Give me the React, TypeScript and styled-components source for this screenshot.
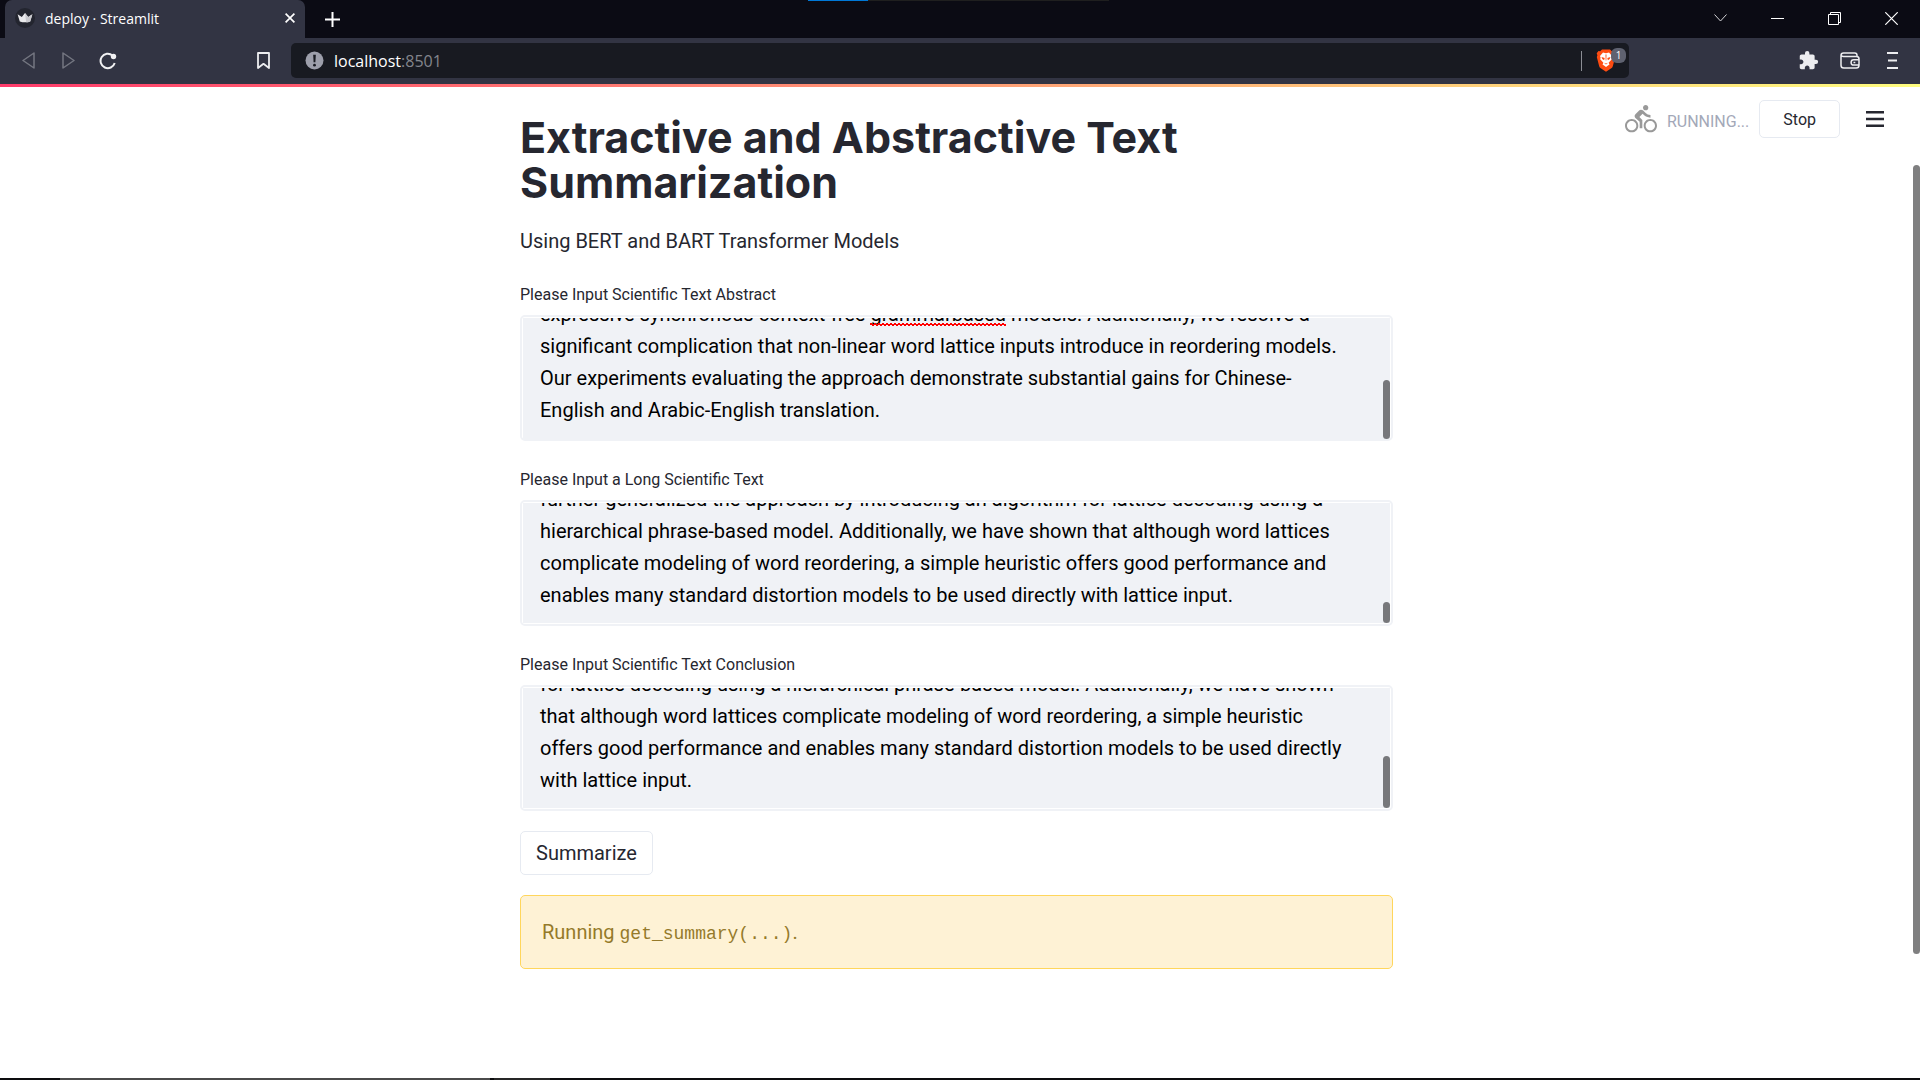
import React, { useLayoutEffect, useRef, useState } from 'react';
import styled, { createGlobalStyle } from 'styled-components';
import { MdDirectionsBike, MdExtension } from 'react-icons/md';

const bodyFont = 'Roboto, "Liberation Sans", sans-serif';
const chromeFont = '"Open Sans", "Noto Sans", sans-serif';
const ink = '#262730';
const field = '#f0f2f6';

const GlobalStyle = createGlobalStyle`
  *, *::before, *::after { box-sizing: border-box; }
  body { margin: 0; font-family: ${bodyFont}; color: ${ink}; background: #fff; }
  button, input, textarea { font: inherit; color: inherit; }
  button { cursor: pointer; }
  svg { display: block; flex: none; }
`;

const Window = styled.div`
  display: flex;
  flex-direction: column;
  min-height: 100vh;
`;

/* ---------- browser frame ---------- */

const TabStrip = styled.div`
  display: flex;
  height: 38px;
  padding-left: 5px;
  color: #fff;
  font-family: ${chromeFont};
  background:
    linear-gradient(90deg, #0078d7 60px, #1f1f1f 60px) 808px 0 / 301px 1px no-repeat,
    #0b0b14;
`;

const Tab = styled.div`
  display: flex;
  align-items: center;
  gap: 10px;
  width: 300px;
  padding: 0 6px 2px 10px;
  border-radius: 7px 7px 0 0;
  background: #323443;
  font-size: 14px;
`;

const TabTitle = styled.span`
  flex: 1;
`;

const BareButton = styled.button<{ $width: number }>`
  display: flex;
  align-items: center;
  justify-content: center;
  width: ${(p) => p.$width}px;
  padding: 0;
  border: 0;
  background: none;
`;

const WindowControls = styled.div`
  display: flex;
  margin-left: auto;
  padding-bottom: 2px;
`;

const Toolbar = styled.div`
  display: grid;
  grid-template-columns: 291px 1fr 291px;
  height: 46px;
  padding: 5px 0 6px;
  background: #323443;
  color: #ededf0;
`;

const ToolGroup = styled.div<{ $gap: number; $end?: boolean }>`
  display: flex;
  align-items: center;
  justify-content: ${(p) => (p.$end ? 'flex-end' : 'flex-start')};
  gap: ${(p) => p.$gap}px;
  padding: 0 18px;
`;

const Spacer = styled.span`
  flex: 1;
`;

const AddressBar = styled.div`
  display: flex;
  align-items: center;
  padding: 0 12px 0 14px;
  border-radius: 5px;
  background: #181a21;
`;

const Address = styled.a`
  flex: 1;
  margin-left: 10px;
  color: #fff;
  font: 16px/24px ${chromeFont};
  text-decoration: none;
`;

const Port = styled.span`
  color: #83858c;
`;

const Divider = styled.span`
  width: 1px;
  height: 20px;
  margin-right: 14px;
  background: #8b8d94;
`;

const ShieldButton = styled.button`
  position: relative;
  padding: 0;
  margin-right: 1px;
  border: 0;
  background: none;
`;

const ShieldCount = styled.span`
  position: absolute;
  top: -1px;
  left: 15px;
  width: 15px;
  border-radius: 6px;
  background: #5f6270;
  color: #fff;
  font: 10px/15px ${chromeFont};
  text-align: center;
`;

/* ---------- page ---------- */

const Rainbow = styled.div`
  height: 3px;
  background: linear-gradient(90deg, #ff3b6b, #fffd80);
`;

const Page = styled.div`
  position: relative;
  display: flex;
  flex: 1;
`;

const Content = styled.main`
  flex: 1;
  padding: 28px 20px 0;
`;

const Column = styled.div`
  max-width: 873px;
  margin: 0 auto;
`;

const PageTrack = styled.div`
  width: 7px;
  padding-top: 78px;
`;

const PageThumb = styled.div`
  height: 789px;
  border-radius: 4px;
  background: #7f7f80;
`;

const StatusBar = styled.header`
  position: absolute;
  top: 13px;
  right: 36px;
  display: flex;
  align-items: center;
  height: 38px;
  font-size: 16px;
`;

const Status = styled.span`
  margin: 5px 10px 0;
  color: #a3a8b8;
  font-size: 16px;
`;

const OutlineButton = styled.button<{ $small?: boolean }>`
  height: ${(p) => (p.$small ? 38 : 44)}px;
  padding: 0 ${(p) => (p.$small ? 23 : 15)}px;
  border: 1px solid #e6eaf1;
  border-radius: 5px;
  background: #fff;
  font-size: ${(p) => (p.$small ? 16 : 20)}px;
`;

const MenuButton = styled.button`
  margin-left: 26px;
  padding: 0;
  border: 0;
  background: none;
`;

const Title = styled.h1`
  margin: 0;
  font: 700 43px/45px Inter, "Liberation Sans", sans-serif;
`;

const Subtitle = styled.p`
  margin: 21px 0 0;
  font-size: 20px;
  line-height: 30px;
`;

const Field = styled.div`
  margin-top: 26px;
`;

const Label = styled.label`
  display: block;
  margin-bottom: 8px;
  font-size: 16px;
  line-height: 25px;
`;

const Frame = styled.div`
  position: relative;
  height: 126px;
  overflow: hidden;
  border: 2px solid ${field};
  border-radius: 5px;
  background: ${field};
`;

const TextArea = styled.textarea<{ $openBottom?: boolean }>`
  display: block;
  width: 100%;
  height: 100%;
  padding: 16px 17px 12px;
  overflow: hidden;
  border: 1px solid #fff;
  border-bottom-color: ${(p) => (p.$openBottom ? field : '#fff')};
  outline: 0;
  background: ${field};
  color: #000;
  font-size: 20px;
  line-height: 32px;
  white-space: pre;
  resize: none;
`;

const Thumb = styled.span<{ $length: number; $openBottom?: boolean }>`
  position: absolute;
  right: 1px;
  bottom: ${(p) => (p.$openBottom ? 0 : 1)}px;
  width: 7px;
  height: ${(p) => p.$length}px;
  border-radius: 4px;
  background: #77787b;
`;

const Squiggle = styled.span`
  position: absolute;
  top: 6px;
  height: 3px;
  background:
    linear-gradient(45deg, transparent 35%, #f00 35%, #f00 65%, transparent 65%) 0 0 / 4px 3px,
    linear-gradient(-45deg, transparent 35%, #f00 35%, #f00 65%, transparent 65%) 2px 0 / 4px 3px;
`;

const Actions = styled.div`
  margin: 20px 0;
`;

const Notice = styled.div`
  padding: 20px 21px;
  border: 1px solid #ffd65c;
  border-radius: 5px;
  background: #fef2d5;
  color: #957a2a;
  font-size: 20px;
  line-height: 32px;
`;

const Code = styled.code`
  font-family: "Liberation Mono", monospace;
  font-size: 18px;
  line-height: 20px;
`;

const Taskbar = styled.div`
  height: 2px;
  background: linear-gradient(
    90deg, #0d0d0f 60px, #4b4b4b 60px, #4b4b4b 490px, #0d0d0f 490px,
    #0d0d0f 494px, #262626 494px, #262626 550px, #0d0d0f 550px
  );
`;

type FieldProps = {
  id: string;
  label: string;
  lines: string[];
  thumb: number;
  openBottom?: boolean;
  misspelt?: string;
};

function LongText({ id, label, lines, thumb, openBottom, misspelt }: FieldProps) {
  const area = useRef<HTMLTextAreaElement>(null);
  const [mark, setMark] = useState<{ left: number; width: number } | null>(null);

  useLayoutEffect(() => {
    const el = area.current;
    if (!el) return;
    el.scrollTop = el.scrollHeight;
    const ctx = document.createElement('canvas').getContext('2d');
    if (misspelt && ctx) {
      ctx.font = `20px ${bodyFont}`;
      const before = lines[0].slice(0, lines[0].indexOf(misspelt));
      setMark({
        left: 18 + Math.round(ctx.measureText(before).width),
        width: Math.round(ctx.measureText(misspelt).width),
      });
    }
  }, []);

  return (
    <Field>
      <Label htmlFor={id}>{label}</Label>
      <Frame>
        <TextArea id={id} ref={area} $openBottom={openBottom} spellCheck={false} defaultValue={lines.join('\n')} />
        {mark && <Squiggle style={mark} />}
        <Thumb $length={thumb} $openBottom={openBottom} />
      </Frame>
    </Field>
  );
}

const Favicon = () => (
  <svg width="20" height="20" viewBox="0 0 20 20">
    <circle cx="10" cy="10" r="10" fill="#23252f" />
    <path d="M2.6 6.2 6.8 9 10 5l3.2 4 4.2-2.8-2.2 7.2q-5.2 1.8-10.4 0z" fill="#e9e9ec" />
    <path d="M10 5l3.2 4 4.2-2.8-2.2 7.2q-2 .8-4 .9z" fill="#c9c9ce" />
  </svg>
);

const Brave = () => (
  <svg width="20" height="23" viewBox="0 0 20 23">
    <path d="M6 .5h8l1.8 1.7 1.7-.2 1.8 2.3-.7 2 .6 1.7-2.4 9.2q-.4 1.3-1.5 2.1L10 22.8l-5.3-3.5q-1.1-.8-1.5-2.1L.8 8l.6-1.7-.7-2L2.500 2l1.700.2z" fill="#fd4c12" />
    <path d="M10 4.200l3-.7 3 3.400-.6 1.800.4 1.500-3.200 3.500.9 1.700-1.500 1.200L10 18l-2-1.400-1.500-1.200.9-1.700L4.200 10.200l.4-1.500L4 6.900l3-3.400z" fill="#fff" />
    <path d="M5.500 8l3.200.9-.6 2.300-1.800-1.300zM14.500 8l-3.200.9.6 2.300 1.800-1.300zM8 13.700l2 .8 2-.8-2 1.900zM9.500 5.500h1l-.2 6h-.6z" fill="#fd4c12" />
  </svg>
);

export default function App() {
  return (
    <Window>
      <GlobalStyle />
      <TabStrip>
        <Tab>
          <Favicon />
          <TabTitle>deploy · Streamlit</TabTitle>
          <BareButton $width={18} aria-label="Close tab">
            <svg width="10" height="10" viewBox="0 0 10 10" stroke="#fff" strokeWidth="1.7"><path d="M.6.6l8.8 8.8M9.4.6L.6 9.4" /></svg>
          </BareButton>
        </Tab>
        <BareButton $width={54} aria-label="New tab">
          <svg width="15" height="15" viewBox="0 0 15 15" stroke="#fff" strokeWidth="2"><path d="M7.5 0v15M0 7.5h15" /></svg>
        </BareButton>
        <WindowControls>
          <BareButton $width={57} aria-label="Search tabs">
            <svg width="13" height="8" viewBox="0 0 13 8" fill="none" stroke="#d5d5d8"><path d="M.5.5l6 6.500 6-6.500" /></svg>
          </BareButton>
          <BareButton $width={57} aria-label="Minimize">
            <svg width="13" height="1" viewBox="0 0 13 1"><path d="M0 0h13v1H0z" fill="#fff" /></svg>
          </BareButton>
          <BareButton $width={57} aria-label="Restore">
            <svg width="13" height="13" viewBox="0 0 13 13" fill="none" stroke="#fff"><path d="M.5 2.500h10v10H.5zM2.500 2.500v-2h10v10h-2" /></svg>
          </BareButton>
          <BareButton $width={57} aria-label="Close">
            <svg width="13" height="13" viewBox="0 0 13 13" stroke="#fff" strokeWidth="1.2"><path d="M.3.3l12.400 12.400M12.700.3L.3 12.700" /></svg>
          </BareButton>
        </WindowControls>
      </TabStrip>
      <Toolbar>
        <ToolGroup $gap={20}>
          <BareButton $width={20} aria-label="Back">
            <svg width="13" height="17" viewBox="0 0 13 17" fill="none" stroke="#747681" strokeWidth="1.5" strokeLinejoin="round"><path d="M12 1v15L1 8.500z" /></svg>
          </BareButton>
          <BareButton $width={20} aria-label="Forward">
            <svg width="13" height="17" viewBox="0 0 13 17" fill="none" stroke="#747681" strokeWidth="1.5" strokeLinejoin="round"><path d="M1 1v15l11-7.500z" /></svg>
          </BareButton>
          <BareButton $width={20} aria-label="Reload">
            <svg width="18" height="18" viewBox="0 0 18 18" fill="none" stroke="#f1f1f3" strokeWidth="2"><path d="M15.700 11A7.200 7.200 0 1 1 13.500 3.500" /><circle cx="14.5" cy="4.5" r="2.7" fill="#f1f1f3" stroke="none" /></svg>
          </BareButton>
          <Spacer />
          <BareButton $width={20} aria-label="Bookmark">
            <svg width="13" height="17" viewBox="0 0 13 17" fill="none" stroke="#ededf0" strokeWidth="1.8" strokeLinejoin="round"><path d="M1 1h11v15l-5.500-4.200L1 16z" /></svg>
          </BareButton>
        </ToolGroup>
        <AddressBar>
          <svg width="19" height="19" viewBox="0 0 19 19"><circle cx="9.5" cy="9.5" r="9" fill="#9d9fab" /><path d="M8.200 3.800h2.600l-.4 7.400H8.600z" fill="#181a21" /><circle cx="9.5" cy="14.2" r="1.4" fill="#181a21" /></svg>
          <Address href="#top">localhost<Port>:8501</Port></Address>
          <Divider />
          <ShieldButton aria-label="Shields">
            <Brave />
            <ShieldCount>1</ShieldCount>
          </ShieldButton>
        </AddressBar>
        <ToolGroup $gap={22} $end>
          <BareButton $width={20} aria-label="Extensions"><MdExtension size={21} /></BareButton>
          <BareButton $width={20} aria-label="Wallet">
            <svg width="20" height="17" viewBox="0 0 20 17" fill="none" stroke="#ededf0" strokeWidth="1.5"><path d="M17 4.500V3.300Q17 1 14.700 1H3.500Q1 1 1 3.500v9.700Q1 16 3.800 16h12.400Q19 16 19 13.200V7q0-2.500-2.500-2.500H3.500Q1.300 4.500 1 2.800" /><path d="M19 7.800h-5.300a2.600 2.600 0 0 0 0 5.200H19M13.500 10.400h1.800" /></svg>
          </BareButton>
          <BareButton $width={20} aria-label="Browser menu">
            <svg width="11" height="17" viewBox="0 0 11 17" stroke="#ededf0" strokeWidth="1.8"><path d="M0 1h11M1 8.500h9M0 16h11" /></svg>
          </BareButton>
        </ToolGroup>
      </Toolbar>
      <Rainbow />
      <Page>
        <Content>
          <Column>
            <Title>Extractive and Abstractive Text Summarization</Title>
            <Subtitle>Using BERT and BART Transformer Models</Subtitle>
            <LongText
              id="abstract"
              label="Please Input Scientific Text Abstract"
              thumb={59}
              openBottom
              misspelt="grammarbased"
              lines={[
                'expressive synchronous context-free grammarbased models. Additionally, we resolve a',
                'significant complication that non-linear word lattice inputs introduce in reordering models.',
                'Our experiments evaluating the approach demonstrate substantial gains for Chinese-',
                'English and Arabic-English translation.',
              ]}
            />
            <LongText
              id="long-text"
              label="Please Input a Long Scientific Text"
              thumb={21}
              lines={[
                'further generalized the approach by introducing an algorithm for lattice decoding using a',
                'hierarchical phrase-based model. Additionally, we have shown that although word lattices',
                'complicate modeling of word reordering, a simple heuristic offers good performance and',
                'enables many standard distortion models to be used directly with lattice input.',
              ]}
            />
            <LongText
              id="conclusion"
              label="Please Input Scientific Text Conclusion"
              thumb={52}
              lines={[
                'for lattice decoding using a hierarchical phrase-based model. Additionally, we have shown',
                'that although word lattices complicate modeling of word reordering, a simple heuristic',
                'offers good performance and enables many standard distortion models to be used directly',
                'with lattice input.',
              ]}
            />
            <Actions>
              <OutlineButton>Summarize</OutlineButton>
            </Actions>
            <Notice role="status">
              Running <Code>get_summary(...)</Code>.
            </Notice>
          </Column>
        </Content>
        <StatusBar>
          <MdDirectionsBike size={32} color="#999" />
          <Status>RUNNING...</Status>
          <OutlineButton $small>Stop</OutlineButton>
          <MenuButton aria-label="Main menu">
            <svg width="18" height="16" viewBox="0 0 18 16" fill={ink}><path d="M0 0h18v2.500H0zM0 6.700h18v2.500H0zM0 13.500h18V16H0z" /></svg>
          </MenuButton>
        </StatusBar>
        <PageTrack>
          <PageThumb />
        </PageTrack>
      </Page>
      <Taskbar />
    </Window>
  );
}
